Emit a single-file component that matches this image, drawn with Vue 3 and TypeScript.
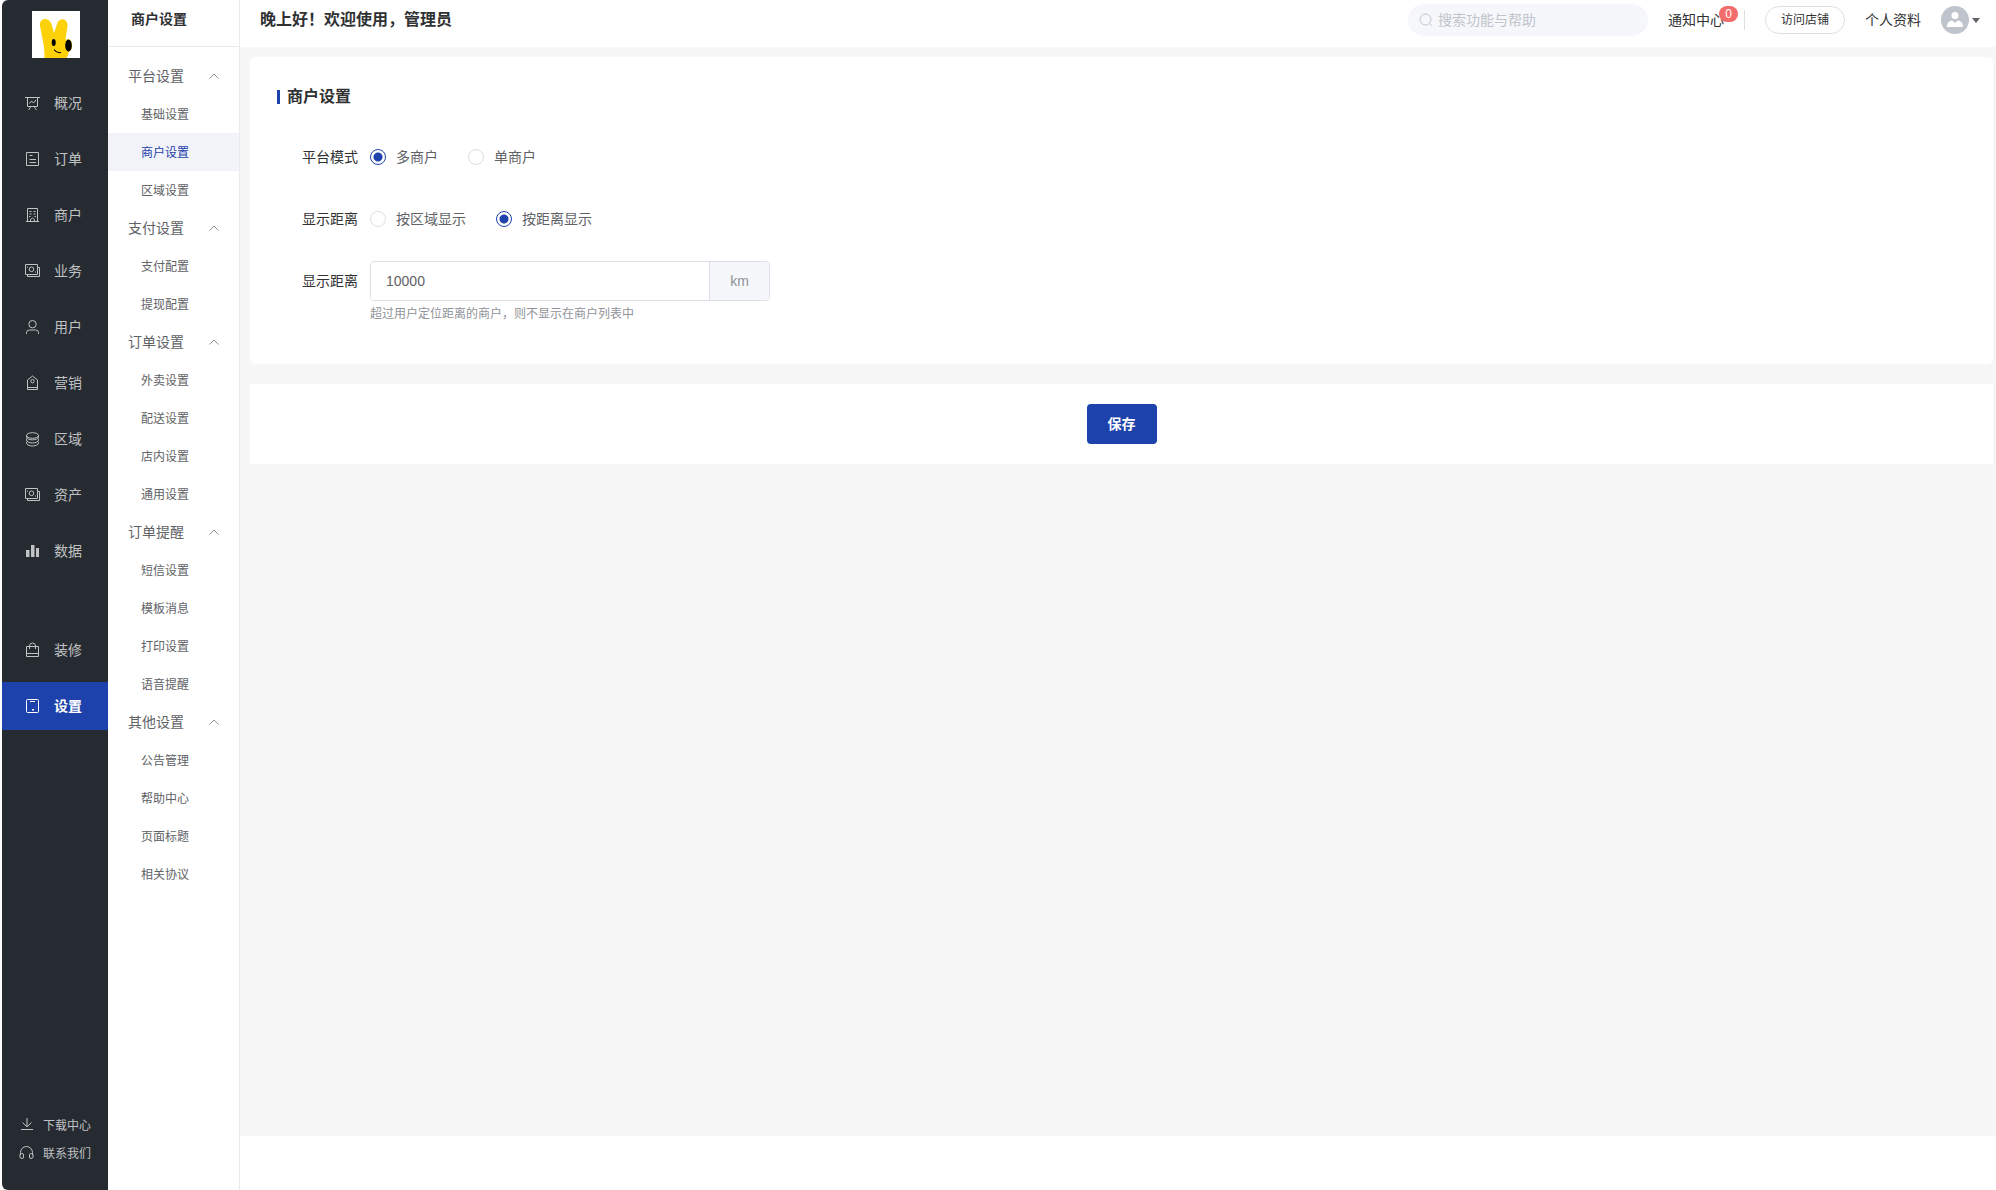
<script setup lang="ts">
import { ref } from 'vue'

interface Icon {
  paths: string[]
  filled?: boolean
}
interface NavItem {
  label: string
  icon: string
  active?: boolean
}
interface MenuGroup {
  title: string
  items: string[]
}

const icons: Record<string, Icon> = {
  board: { paths: ['M0 2.5H15', 'M2.5 2.5V11.5H12.5V2.5', 'M4.5 8.5L6.5 6L8.5 8L11 5', 'M6 11.5L3.500 15M9 11.5L11.500 15'] },
  order: { paths: ['M1.5 1.5H13.5V14.5H1.5Z', 'M4.500 4.500H7.500M4.500 8.500H11M4.500 11.500H11'] },
  shop: { paths: ['M2.5 14.5V1.5H12.5V14.5', 'M1 14.5H14', 'M5.500 14.500V12.500Q7.500 9.500 9.500 12.500V14.500', 'M4.500 4.500H6.500M8.500 4.500H10.500M4.500 7H6.500M8.500 7H10.500M4 9.500H5.500M9.500 9.500H11'] },
  money: { paths: ['M.5 1.5H12.5V11.5H.5Z', 'M12.5 4.5H14.5V13.5H2.500V11.500', 'M6.500 4A2.300 2.300 0 1 0 6.500 8.600A2.300 2.300 0 1 0 6.500 4Z', 'M2.500 3.500V4.500M10.500 8.500V9.500'] },
  user: { paths: ['M7.500 1.500A3.700 3.700 0 1 0 7.500 8.900A3.700 3.700 0 1 0 7.500 1.500Z', 'M1.500 15V13.500Q1.500 11 4.500 11H10.500Q13.500 11 13.500 13.500V15'] },
  tag: { paths: ['M2.500 5L7.500 1L12.500 5V14.500H2.500Z', 'M2.500 12.500H12.500', 'M7.500 4.500A1.700 1.700 0 1 0 7.500 7.900A1.700 1.700 0 1 0 7.500 4.500Z'] },
  coins: { paths: ['M1.500 4.500A6 2.800 0 1 0 13.500 4.500A6 2.800 0 1 0 1.500 4.500Z', 'M1.500 4.500V6C2 8 4.500 8.800 7.500 8.800S13 8 13.500 6V4.500', 'M2.200 7.200C0 9.500 3 12 7.500 12S15 9.500 12.800 7.200', 'M2.200 10.400C0 12.500 3 15 7.500 15S15 12.500 12.800 10.400'] },
  bars: { filled: true, paths: ['M1 7H4.500V14H1Z', 'M6 2H9.500V14H6Z', 'M11 5H14V14H11Z'] },
  bag: { paths: ['M1.500 4.500H13.500V14.500H1.500Z', 'M1.500 11.500H13.500', 'M4.500 7V4Q4.500 1 7.500 1T10.500 4V7'] },
  tablet: { paths: ['M2.500 1.500H12.500Q13.500 1.500 13.500 2.500V13.500Q13.500 14.500 12.500 14.500H2.500Q1.500 14.500 1.500 13.500V2.500Q1.500 1.500 2.500 1.500Z', 'M5 3.500H10', 'M7 11.500H9M7 12H9'] },
  download: { paths: ['M8 0V8.500', 'M3.500 4.500L8 8.800L12.500 4.500', 'M2 11.500H14'] },
  headset: { paths: ['M1.500 9V6.500A6 6 0 0 1 13.500 6.500V9', 'M2.500 7.500H3Q4.500 7.500 4.500 9V11Q4.500 12.500 3 12.500Q.800 12.500 .800 10Q.800 7.500 2.500 7.500Z', 'M12.500 7.500H12Q10.500 7.500 10.500 9V11Q10.500 12.500 12 12.500Q14.200 12.500 14.200 10Q14.200 7.500 12.500 7.500Z'] },
}

const navGroups: NavItem[][] = [
  [
    { label: '概况', icon: 'board' },
    { label: '订单', icon: 'order' },
    { label: '商户', icon: 'shop' },
    { label: '业务', icon: 'money' },
    { label: '用户', icon: 'user' },
    { label: '营销', icon: 'tag' },
    { label: '区域', icon: 'coins' },
    { label: '资产', icon: 'money' },
    { label: '数据', icon: 'bars' },
  ],
  [
    { label: '装修', icon: 'bag' },
    { label: '设置', icon: 'tablet', active: true },
  ],
]

const helpLinks: NavItem[] = [
  { label: '下载中心', icon: 'download' },
  { label: '联系我们', icon: 'headset' },
]

const menu: MenuGroup[] = [
  { title: '平台设置', items: ['基础设置', '商户设置', '区域设置'] },
  { title: '支付设置', items: ['支付配置', '提现配置'] },
  { title: '订单设置', items: ['外卖设置', '配送设置', '店内设置', '通用设置'] },
  { title: '订单提醒', items: ['短信设置', '模板消息', '打印设置', '语音提醒'] },
  { title: '其他设置', items: ['公告管理', '帮助中心', '页面标题', '相关协议'] },
]

const current = ref('商户设置')
const closed = ref<string[]>([])
const mode = ref('multi')
const display = ref('distance')
const distance = ref('10000')
const keyword = ref('')

function toggle(title: string) {
  closed.value = closed.value.includes(title)
    ? closed.value.filter((t) => t !== title)
    : [...closed.value, title]
}
</script>

<template>
  <div class="layout">
    <aside class="sidebar">
      <a class="logo" href="#" aria-label="首页">
        <svg viewBox="0 0 48 47" aria-hidden="true">
          <path fill="#fdd108" d="M12.500 47C13 36 9.500 24 8 15C7 6 17 6 19.500 13L22 22L25 13C27 6 36 7 35.500 15C35 20 34 24 33.500 28C38 33 38 42 34.500 47Z" />
          <ellipse cx="36" cy="34.500" rx="4.200" ry="6.500" fill="#fdd108" />
          <ellipse cx="21.700" cy="31.500" rx="2" ry="3.500" />
          <ellipse cx="36.500" cy="34.500" rx="3.300" ry="6" />
          <path fill="none" stroke="#000" stroke-width="1.200" stroke-linecap="round" d="M22.500 39Q25 42.500 28.500 41.500" />
        </svg>
      </a>
      <nav class="nav">
        <ul v-for="(group, gi) in navGroups" :key="gi" class="nav-group">
          <li v-for="item in group" :key="item.label">
            <a href="#" class="nav-link" :class="{ active: item.active }">
              <svg class="icon" :class="{ filled: icons[item.icon].filled }" viewBox="0 0 16 16" aria-hidden="true">
                <path v-for="d in icons[item.icon].paths" :key="d" :d="d" />
              </svg>
              <span>{{ item.label }}</span>
            </a>
          </li>
        </ul>
      </nav>
      <div class="help">
        <a v-for="item in helpLinks" :key="item.label" href="#" class="help-link">
          <svg class="icon" viewBox="0 0 16 16" aria-hidden="true">
            <path v-for="d in icons[item.icon].paths" :key="d" :d="d" />
          </svg>
          <span>{{ item.label }}</span>
        </a>
      </div>
    </aside>

    <aside class="submenu">
      <h2 class="submenu-title">商户设置</h2>
      <nav class="submenu-nav">
        <section v-for="group in menu" :key="group.title">
          <button type="button" class="group-title" @click="toggle(group.title)">
            <span>{{ group.title }}</span>
            <svg class="chevron" :class="{ down: closed.includes(group.title) }" viewBox="0 0 10 6" aria-hidden="true">
              <path d="M.5 5.500L5 1L9.500 5.500" />
            </svg>
          </button>
          <template v-if="!closed.includes(group.title)">
            <a
              v-for="item in group.items"
              :key="item"
              href="#"
              class="sub-link"
              :class="{ active: item === current }"
              @click.prevent="current = item"
            >{{ item }}</a>
          </template>
        </section>
      </nav>
    </aside>

    <div class="main">
      <header class="topbar">
        <h1 class="greeting">晚上好！欢迎使用，管理员</h1>
        <label class="search">
          <svg viewBox="0 0 14 14" aria-hidden="true">
            <circle cx="6.500" cy="6.500" r="5.500" />
            <path d="M10.500 10.500L12.800 12.800" />
          </svg>
          <input v-model="keyword" type="text" placeholder="搜索功能与帮助" aria-label="搜索功能与帮助" />
        </label>
        <a href="#" class="notice">通知中心<span class="badge">0</span></a>
        <button type="button" class="visit">访问店铺</button>
        <a href="#" class="profile">个人资料</a>
        <button type="button" class="account" aria-label="账户">
          <svg class="avatar" viewBox="0 0 28 28" aria-hidden="true">
            <circle cx="14" cy="14" r="14" fill="#c0c4cc" />
            <circle cx="14" cy="9.500" r="3.500" fill="#fff" />
            <path fill="#fff" d="M6 21C6 17 8 15 11 14.500L14 17L17 14.500C20 15 22 17 22 21Z" />
          </svg>
          <svg class="caret" viewBox="0 0 8 5" aria-hidden="true"><path d="M0 0H8L4 5Z" /></svg>
        </button>
      </header>

      <main class="content">
        <form class="form" @submit.prevent>
          <div class="card">
            <h3 class="card-title">商户设置</h3>
            <div class="row" role="radiogroup" aria-labelledby="mode-label">
              <span id="mode-label" class="label">平台模式</span>
              <label class="radio"><input v-model="mode" type="radio" name="mode" value="multi" /><span>多商户</span></label>
              <label class="radio"><input v-model="mode" type="radio" name="mode" value="single" /><span>单商户</span></label>
            </div>
            <div class="row" role="radiogroup" aria-labelledby="display-label">
              <span id="display-label" class="label">显示距离</span>
              <label class="radio"><input v-model="display" type="radio" name="display" value="area" /><span>按区域显示</span></label>
              <label class="radio"><input v-model="display" type="radio" name="display" value="distance" /><span>按距离显示</span></label>
            </div>
            <div class="row">
              <label class="label" for="distance">显示距离</label>
              <div class="field">
                <div class="input-group">
                  <input id="distance" v-model="distance" type="text" aria-describedby="distance-hint" />
                  <span class="unit">km</span>
                </div>
                <p id="distance-hint" class="hint">超过用户定位距离的商户，则不显示在商户列表中</p>
              </div>
            </div>
          </div>
          <div class="actions">
            <button type="submit" class="save">保存</button>
          </div>
        </form>
      </main>
    </div>
  </div>
</template>

<style>
body {
  margin: 0;
  background: #fff;
}
</style>

<style scoped>
.layout,
.layout * {
  box-sizing: border-box;
}
.layout {
  display: flex;
  min-height: 100vh;
  padding-left: 2px;
  font-family: "Liberation Sans", "Noto Sans CJK SC", sans-serif;
  font-size: 14px;
  line-height: 20px;
  color: #303133;
}
a {
  color: inherit;
  text-decoration: none;
}
button,
input {
  font: inherit;
  color: inherit;
}
button {
  padding: 0;
  border: 0;
  background: none;
  cursor: pointer;
}
h1,
h2,
h3,
p,
ul {
  margin: 0;
  padding: 0;
}
li {
  list-style: none;
}

.sidebar {
  display: flex;
  flex-direction: column;
  flex: none;
  width: 106px;
  padding: 11px 0 22px;
  border-radius: 6px 0 0 6px;
  background: #262b32;
  color: #c0c2c4;
}
.logo {
  width: 48px;
  height: 47px;
  margin-left: 30px;
  background: #fff;
}
.logo svg {
  display: block;
}
.nav {
  display: flex;
  flex-direction: column;
  gap: 51px;
  margin-top: 21px;
}
.nav-group {
  display: flex;
  flex-direction: column;
  gap: 8px;
}
.nav-link {
  display: flex;
  align-items: center;
  gap: 13px;
  height: 48px;
  padding-left: 23px;
}
.nav-link.active {
  background: #1e42ab;
  color: #fff;
  font-weight: 700;
}
.icon {
  flex: none;
  width: 16px;
  height: 16px;
  fill: none;
  stroke: currentColor;
  stroke-width: 1;
}
.icon.filled {
  fill: currentColor;
  stroke: none;
}
.help {
  margin-top: auto;
  font-size: 12px;
}
.help-link {
  display: flex;
  align-items: center;
  gap: 8px;
  height: 28px;
  padding-left: 17px;
}

.submenu {
  flex: none;
  width: 132px;
  border-right: 1px solid #ebebeb;
}
.submenu-title {
  height: 47px;
  padding: 9px 0 0 23px;
  border-bottom: 1px solid #ebebeb;
  font-size: 14px;
  font-weight: 700;
}
.submenu-nav {
  padding-top: 10px;
}
.group-title {
  display: flex;
  align-items: center;
  justify-content: space-between;
  width: 100%;
  height: 38px;
  padding: 0 20px;
  color: #606266;
}
.chevron {
  width: 10px;
  height: 6px;
  fill: none;
  stroke: #909399;
}
.chevron.down {
  transform: rotate(180deg);
}
.sub-link {
  display: block;
  height: 38px;
  padding-left: 33px;
  font-size: 12px;
  line-height: 40px;
  color: #606266;
}
.sub-link.active {
  background: #f2f3f8;
  color: #1e42ab;
}

.main {
  display: flex;
  flex: 1;
  flex-direction: column;
  min-width: 0;
  padding-bottom: 54px;
}
.topbar {
  display: flex;
  align-items: center;
  height: 47px;
  padding: 0 16px 7px 20px;
}
.greeting {
  margin-right: auto;
  font-size: 16px;
  font-weight: 700;
}
.search {
  display: flex;
  align-items: center;
  gap: 5px;
  width: 240px;
  height: 32px;
  margin-right: 20px;
  padding: 0 11px;
  border-radius: 16px;
  background: #f5f7fa;
}
.search svg {
  flex: none;
  width: 14px;
  height: 14px;
  fill: none;
  stroke: #c0c4cc;
}
.search input {
  flex: 1;
  min-width: 0;
  padding: 0;
  border: 0;
  outline: 0;
  background: none;
}
.search input::placeholder {
  color: #c0c4cc;
}
.notice {
  position: relative;
  padding-right: 20px;
  border-right: 1px solid #dcdfe6;
}
.badge {
  position: absolute;
  top: -4px;
  right: 6px;
  width: 19px;
  height: 16px;
  border-radius: 8px;
  background: #f56c6c;
  color: #fff;
  font-size: 12px;
  line-height: 16px;
  text-align: center;
}
.visit {
  width: 80px;
  height: 28px;
  margin: 0 20px;
  border: 1px solid #dcdfe6;
  border-radius: 14px;
  font-size: 12px;
}
.account {
  display: flex;
  align-items: center;
  gap: 3px;
  margin-left: 20px;
}
.avatar {
  width: 28px;
  height: 28px;
}
.caret {
  width: 8px;
  height: 5px;
  fill: #606266;
}

.content {
  flex: 1;
  padding: 10px 3px 10px 10px;
  background: #f7f7f7;
}
.form {
  display: flex;
  flex-direction: column;
  gap: 20px;
}
.card {
  display: flex;
  flex-direction: column;
  gap: 22px;
  padding: 30px 27px 39px;
  border-radius: 5px;
  background: #fff;
}
.card-title {
  display: flex;
  align-items: center;
  gap: 7px;
  height: 20px;
  margin-bottom: 8px;
  font-size: 16px;
  font-weight: 700;
}
.card-title::before {
  content: "";
  width: 3px;
  height: 14px;
  background: #1e42ab;
}
.row {
  display: flex;
  align-items: flex-start;
  padding-left: 25px;
  line-height: 40px;
}
.label {
  margin-right: 12px;
}
.radio {
  display: flex;
  align-items: center;
  gap: 10px;
  margin-right: 30px;
  color: #606266;
  cursor: pointer;
}
.radio input {
  appearance: none;
  width: 16px;
  height: 16px;
  margin: 0;
  border: 1px solid #dcdfe6;
  border-radius: 50%;
  background: #fff;
}
.radio input:checked {
  border-color: #1e42ab;
  background: radial-gradient(circle, #1e42ab 4px, #fff 5px);
}
.field {
  width: 400px;
}
.input-group {
  display: flex;
  height: 40px;
  border: 1px solid #dcdfe6;
  border-radius: 4px;
  color: #606266;
  overflow: hidden;
}
.input-group input {
  flex: 1;
  min-width: 0;
  padding: 0 15px;
  border: 0;
  outline: 0;
  background: #fff;
}
.unit {
  padding: 0 20px;
  border-left: 1px solid #dcdfe6;
  background: #f5f7fa;
  color: #909399;
  line-height: 38px;
}
.hint {
  padding-top: 2px;
  font-size: 12px;
  line-height: 22px;
  color: #909399;
}
.actions {
  display: flex;
  justify-content: center;
  padding: 20px 0;
  background: #fff;
}
.save {
  width: 70px;
  height: 40px;
  border-radius: 4px;
  background: #1e42ab;
  color: #fff;
  font-weight: 700;
}
</style>
